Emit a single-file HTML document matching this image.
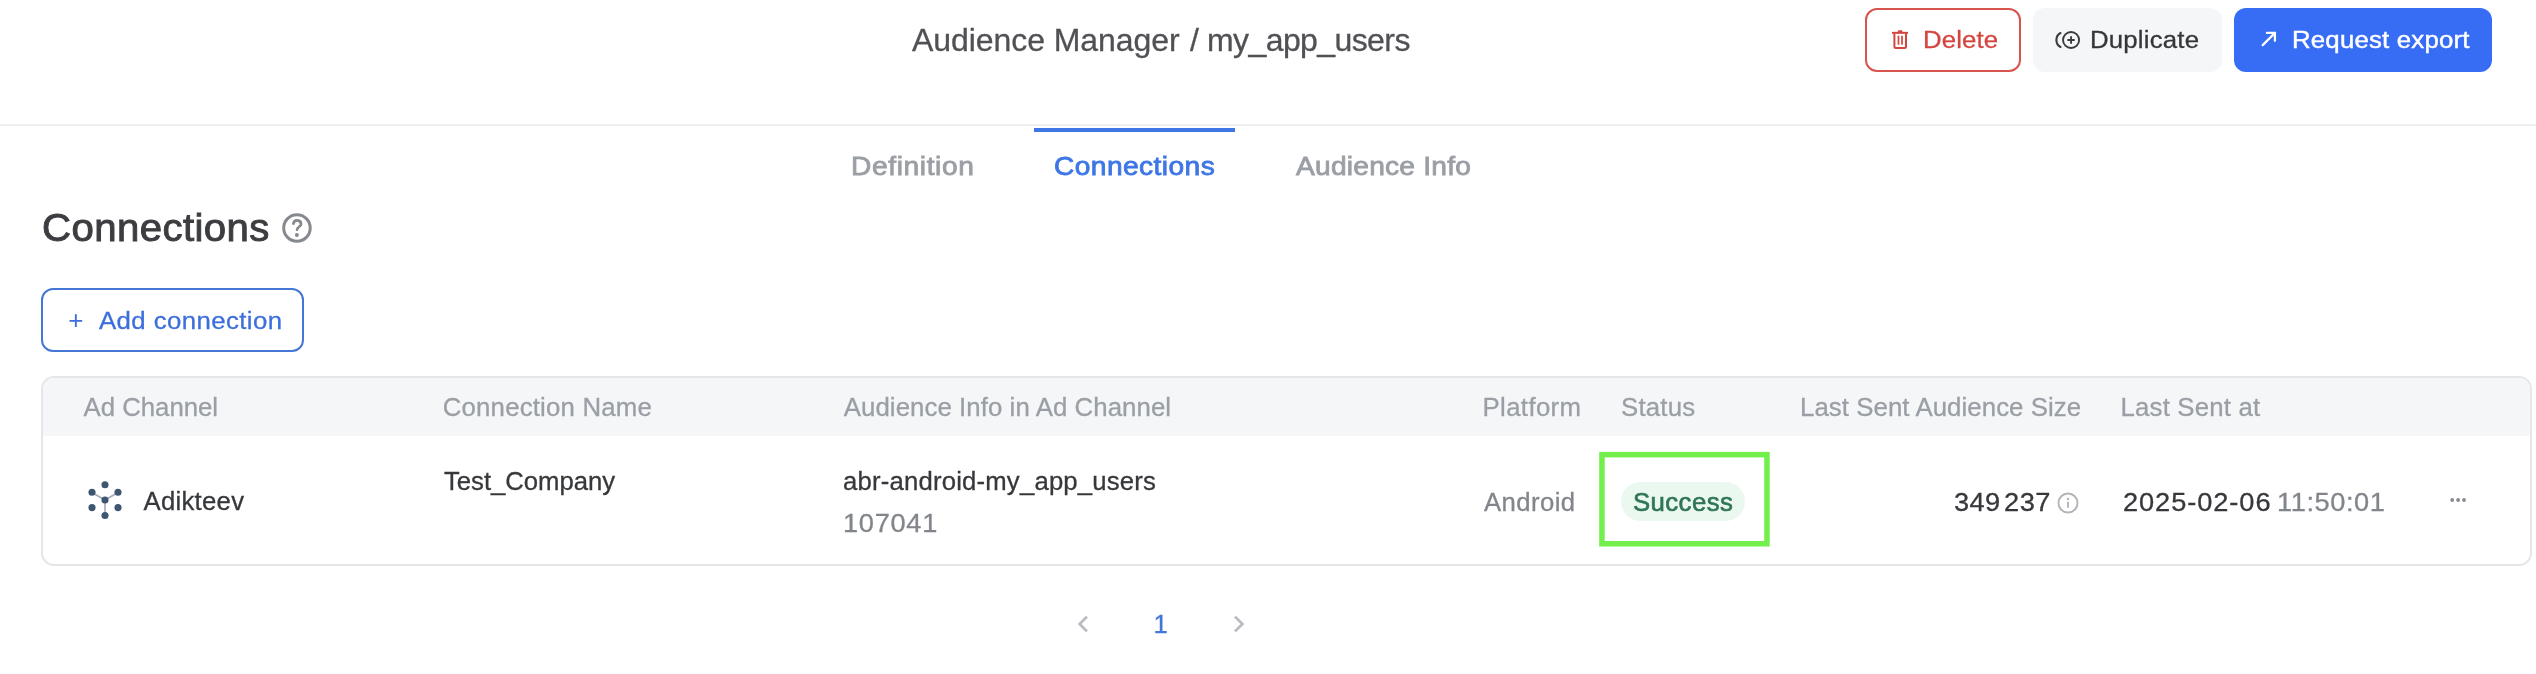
<!DOCTYPE html>
<html lang="en">
<head>
<meta charset="utf-8">
<title>Audience Manager / my_app_users</title>
<style>
  html, body { margin: 0; padding: 0; background: #ffffff; }
  body {
    width: 2536px; height: 674px; position: relative; overflow: hidden;
    font-family: "Liberation Sans", sans-serif; color: #333538;
  }
  #page { position: absolute; left: 0; top: 0; width: 2536px; height: 674px; will-change: transform; }
  .abs { position: absolute; white-space: nowrap; }
  .t { position: absolute; white-space: nowrap; line-height: 1; margin: 0; -webkit-text-stroke: 0.3px currentColor; }

  #hline { left: 0; top: 124px; width: 2536px; height: 2px; background: #eceef1; }
  .btn { position: absolute; top: 8px; height: 64px; box-sizing: border-box; border-radius: 12px; }
  #b-del { left: 1865px; width: 156px; border: 2px solid #d8544f; background: #fff; }
  #b-dup { left: 2033px; width: 189px; background: #f5f6f8; }
  #b-exp { left: 2234px; width: 258px; background: #376cf5; }
  #tabbar { left: 1034px; top: 128px; width: 201px; height: 4px; background: #3f76e6; }
  #b-add { left: 41px; top: 288px; width: 263px; height: 64px; box-sizing: border-box; border: 2px solid #4476d6; border-radius: 12px; background: #fff; }
  #table { left: 41px; top: 376px; width: 2491px; height: 190px; box-sizing: border-box; border: 2px solid #e5e6ea; border-radius: 13px; background: #fff; overflow: hidden; }
  #thead { position: absolute; left: 0; top: 0; width: 100%; height: 58px; background: #f5f6f8; }
  #badge { left: 1621px; top: 482px; width: 124px; height: 39px; border-radius: 20px; background: #ebf8ef; }

  /* text colours / weights */
  .ttl { color: #505155; }
  #tExp { -webkit-text-stroke: 0.45px currentColor; }
  #tDel { color: #d4453f; }
  #tDup { color: #34363a; }
  #tExp { color: #ffffff; }
  .tab { color: #9b9fa5; -webkit-text-stroke: 0.8px currentColor; }
  #tab2 { color: #3f76e6; }
  #h1 { color: #3c3d40; font-weight: normal; -webkit-text-stroke: 0.95px currentColor; }
  #plus, #tAdd { color: #3c6fdc; }
  #plus { left: 68.300px; top: 307px; font-size: 26px; -webkit-text-stroke: 0; }
  .th { color: #9a9fa5; }
  .td { color: #36383b; }
  .muted { color: #82868b; }
  #cSucc { color: #2f7553; -webkit-text-stroke: 0.6px currentColor; }
  #pg1 { color: #4377d8; }
</style>
<style id="tuned">
/*TUNED-START*/
#titleA { left: 912.00px; top: 24px; font-size: 32px; letter-spacing: -0.067px; }
#titleB { left: 1190.00px; top: 24px; font-size: 32px; letter-spacing: 0.000px; }
#titleC { left: 1207.00px; top: 24px; font-size: 32px; letter-spacing: -0.591px; }
#tDel { left: 1923.00px; top: 28.3px; font-size: 24.8px; letter-spacing: 0.096px; transform: scaleX(1.04); transform-origin: 0 0; }
#tDup { left: 2090.25px; top: 28.3px; font-size: 24.8px; letter-spacing: 0.180px; transform: scaleX(1.04); transform-origin: 0 0; }
#tExp { left: 2291.50px; top: 28.3px; font-size: 24.8px; letter-spacing: 0.185px; transform: scaleX(1.04); transform-origin: 0 0; }
#tab1 { left: 851.00px; top: 154px; font-size: 25.6px; letter-spacing: 0.556px; transform: scaleX(1.1); transform-origin: 0 0; }
#tab2 { left: 1053.75px; top: 154px; font-size: 25.6px; letter-spacing: 0.386px; transform: scaleX(1.1); transform-origin: 0 0; }
#tab3 { left: 1296.00px; top: 154px; font-size: 25.6px; letter-spacing: 0.208px; transform: scaleX(1.1); transform-origin: 0 0; }
#h1 { left: 41.50px; top: 208.3px; font-size: 39.4px; letter-spacing: 0.392px; transform: scaleX(1.02); transform-origin: 0 0; }
#tAdd { left: 99.00px; top: 309px; font-size: 24.8px; letter-spacing: 0.388px; transform: scaleX(1.04); transform-origin: 0 0; }
#th1 { left: 83.50px; top: 395px; font-size: 25.8px; letter-spacing: -0.028px; }
#th2 { left: 442.75px; top: 395px; font-size: 25.8px; letter-spacing: 0.179px; }
#th3 { left: 843.75px; top: 395px; font-size: 25.8px; letter-spacing: 0.067px; }
#th4 { left: 1482.50px; top: 395px; font-size: 25.8px; letter-spacing: 0.357px; }
#th5 { left: 1621.00px; top: 395px; font-size: 25.8px; letter-spacing: 0.200px; }
#th6 { left: 1800.00px; top: 395px; font-size: 25.8px; letter-spacing: 0.068px; }
#th7 { left: 2120.50px; top: 395px; font-size: 25.8px; letter-spacing: 0.182px; }
#cAd { left: 143.50px; top: 489px; font-size: 25.7px; letter-spacing: 0.286px; }
#cTest { left: 444.00px; top: 469px; font-size: 25.7px; letter-spacing: -0.023px; }
#cAbr { left: 843.00px; top: 469px; font-size: 25.7px; letter-spacing: 0.196px; }
#cNum { left: 842.50px; top: 511px; font-size: 25.7px; letter-spacing: 0.660px; transform: scaleX(1.06); transform-origin: 0 0; }
#cAndroid { left: 1484.00px; top: 490px; font-size: 25.7px; letter-spacing: 0.417px; }
#cSucc { left: 1632.50px; top: 490px; font-size: 25.0px; letter-spacing: 0.405px; transform: scaleX(1.03); transform-origin: 0 0; }
#cSizeA { left: 1953.75px; top: 490px; font-size: 25.7px; letter-spacing: 0.354px; transform: scaleX(1.06); transform-origin: 0 0; }
#cSizeB { left: 2004.00px; top: 490px; font-size: 25.7px; letter-spacing: 0.472px; transform: scaleX(1.06); transform-origin: 0 0; }
#cDate { left: 2122.50px; top: 490px; font-size: 25.7px; letter-spacing: 0.865px; transform: scaleX(1.06); transform-origin: 0 0; }
#cTime { left: 2277.00px; top: 490px; font-size: 25.7px; letter-spacing: 0.539px; transform: scaleX(1.06); transform-origin: 0 0; }
#pg1 { left: 1153.50px; top: 612px; font-size: 25.7px; letter-spacing: 0.000px; }
/*TUNED-END*/
</style>
</head>
<body>
<div id="page">

<!-- Header -->
<div class="t ttl" id="titleA">Audience Manager</div> <div class="t ttl" id="titleB">/</div> <div class="t ttl" id="titleC">my_app_users</div>
<div class="abs" id="hline"></div>

<div class="btn" id="b-del"></div>
<svg class="abs" style="left:1890px;top:28px" width="20" height="24" viewBox="0 0 20 24" fill="none" stroke="#d4453f" stroke-width="2">
  <path d="M2 4.850H18"/>
  <path d="M7.800 4.200V3.600Q7.800 2.200 9.200 2.200H11.100Q12.500 2.200 12.500 3.600V4.200Z" fill="#d4453f" stroke="none"/>
  <path d="M4.400 5.800V18.600Q4.400 20.100 5.900 20.100H14.500Q16 20.100 16 18.600V5.800"/>
  <path d="M8.500 8.300V16M12 8.300V16" stroke-width="1.700" stroke-linecap="round"/>
</svg>
<div class="t" id="tDel">Delete</div>

<div class="btn" id="b-dup"></div>
<svg class="abs" style="left:2052px;top:28px" width="30" height="24" viewBox="0 0 30 24" fill="none" stroke="#3a3c40" stroke-width="1.900" stroke-linecap="round">
  <circle cx="19.060" cy="12" r="8.050"/>
  <path d="M16.100 12H22M19.060 9.050V14.950"/>
  <path d="M8.500 5A8 8 0 0 0 8.500 19" stroke-width="2.100"/>
</svg>
<div class="t" id="tDup">Duplicate</div>

<div class="btn" id="b-exp"></div>
<svg class="abs" style="left:2258px;top:28px" width="22" height="22" viewBox="0 0 22 22" fill="none" stroke="#ffffff" stroke-width="2.300" stroke-linecap="round" stroke-linejoin="miter">
  <path d="M4.700 17.100L16.600 5.200"/>
  <path d="M8.900 4.900H16.900V12.800"/>
</svg>
<div class="t" id="tExp">Request export</div>

<!-- Tabs -->
<div class="abs" id="tabbar"></div>
<div class="t tab" id="tab1">Definition</div>
<div class="t tab" id="tab2">Connections</div>
<div class="t tab" id="tab3">Audience Info</div>

<!-- Heading -->
<h1 class="t" id="h1">Connections</h1>
<svg class="abs" style="left:281px;top:212px" width="32" height="32" viewBox="0 0 32 32" fill="none" stroke="#86898d" stroke-width="3">
  <circle cx="15.960" cy="15.960" r="13.250"/>
  <path d="M12.400 11.700A3.850 3.850 0 0 1 20.050 12.100C20.050 14.800 16.150 14.700 16.050 17.700" stroke-width="2.700" stroke-linecap="round"/>
  <circle cx="15.900" cy="23.050" r="1.950" fill="#86898d" stroke="none"/>
</svg>

<!-- Add connection -->
<div class="abs" id="b-add"></div>
<div class="t" id="plus">+</div>
<div class="t" id="tAdd">Add connection</div>

<!-- Table -->
<div class="abs" id="table"><div id="thead"></div></div>
<div class="t th" id="th1">Ad Channel</div>
<div class="t th" id="th2">Connection Name</div>
<div class="t th" id="th3">Audience Info in Ad Channel</div>
<div class="t th" id="th4">Platform</div>
<div class="t th" id="th5">Status</div>
<div class="t th" id="th6">Last Sent Audience Size</div>
<div class="t th" id="th7">Last Sent at</div>

<!-- Row -->
<svg class="abs" style="left:84px;top:478px" width="42" height="44" viewBox="0 0 42 44">
  <g stroke="#a3abb8" stroke-width="1.600" fill="none">
    <path d="M21 22L8 14.500M21 22L34 14.500M21 22V37.500"/>
  </g>
  <g fill="#3f5670">
    <circle cx="21" cy="6.700" r="3.550"/>
    <circle cx="8" cy="14.300" r="3.550"/>
    <circle cx="34" cy="14.300" r="3.550"/>
    <circle cx="21" cy="22" r="3.550"/>
    <circle cx="8" cy="29.600" r="3.550"/>
    <circle cx="34" cy="29.600" r="3.550"/>
    <circle cx="21" cy="37.500" r="3.550"/>
  </g>
</svg>
<div class="t td" id="cAd">Adikteev</div>
<div class="t td" id="cTest">Test_Company</div>
<div class="t td" id="cAbr">abr-android-my_app_users</div>
<div class="t td muted" id="cNum">107041</div>
<div class="t td muted" id="cAndroid">Android</div>

<svg class="abs" style="left:1596px;top:448px" width="178" height="102" viewBox="0 0 178 102" fill="none"><rect x="5.950" y="6.650" width="165" height="89.100" stroke="#72ef4b" stroke-width="5.500"/></svg>
<div class="abs" id="badge"></div>
<div class="t td" id="cSucc">Success</div>

<div class="t td" id="cSizeA">349</div>
<div class="t td" id="cSizeB">237</div>
<svg class="abs" style="left:2057.300px;top:491.900px" width="22" height="22" viewBox="0 0 22 22" fill="none" stroke="#b2b5b9" stroke-width="1.900">
  <circle cx="11" cy="11" r="9.550"/>
  <path d="M11 9.800v5.900"/>
  <circle cx="10.950" cy="7" r="1.250" fill="#b2b5b9" stroke="none"/>
</svg>
<div class="t td" id="cDate">2025-02-06</div>
<div class="t td muted" id="cTime">11:50:01</div>
<svg class="abs" style="left:2449px;top:497px" width="18" height="6" viewBox="0 0 18 6" fill="#85888d">
  <circle cx="3.200" cy="3" r="1.900"/><circle cx="9.100" cy="3" r="1.900"/><circle cx="15" cy="3" r="1.900"/>
</svg>

<!-- Pagination -->
<svg class="abs" style="left:1076px;top:614px" width="14" height="20" viewBox="0 0 14 20" fill="none" stroke="#b8bbc0" stroke-width="2.700">
  <path d="M11 2.600L3.600 10l7.400 7.400"/>
</svg>
<div class="t" id="pg1">1</div>
<svg class="abs" style="left:1232px;top:614px" width="14" height="20" viewBox="0 0 14 20" fill="none" stroke="#b8bbc0" stroke-width="2.700">
  <path d="M3 2.600L10.400 10l-7.400 7.400"/>
</svg>

</div>
</body>
</html>
